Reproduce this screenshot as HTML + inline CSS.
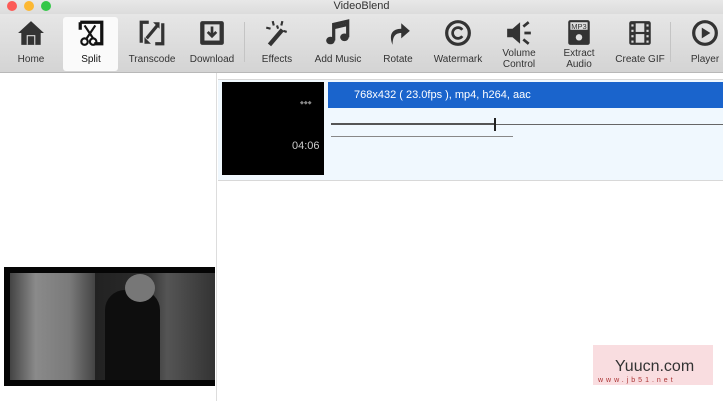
<!DOCTYPE html><html><head><style>
body{margin:0;width:723px;height:401px;overflow:hidden;background:#fff;font-family:"Liberation Sans",sans-serif;position:relative}
.a{position:absolute}
#title{left:0;top:0;width:723px;height:14px;background:linear-gradient(#e8e8e8,#dcdcdc);font-size:11px;text-align:center;line-height:13px;color:#333}
#tb{left:0;top:14px;width:723px;height:58px;background:linear-gradient(#e6e6e6,#d4d4d4);border-bottom:1px solid #b8b8b8}
.dot{width:10px;height:10px;border-radius:50%;top:1px}
.it{position:absolute;top:0;width:60px;height:58px;text-align:center;font-size:10px;color:#333}
.it svg{position:absolute;left:16px;top:5px}
.it span{position:absolute;left:-10px;right:-10px;top:40px;line-height:11px}
.sep{position:absolute;top:8px;width:1px;height:40px;background:#c4c4c4}
</style></head><body>
<div id="title" class="a">VideoBlend</div>
<div class="a dot" style="left:7px;background:#fc5b57"></div>
<div class="a dot" style="left:24px;background:#fcb833"></div>
<div class="a dot" style="left:41px;background:#34c748"></div>
<div id="tb" class="a">
<div class="it" style="left:1px"><svg width="28" height="28" viewBox="0 0 26 26"><path d="M13 2 L1 13 L4 13 L4 24 L22 24 L22 13 L25 13 Z" fill="#333"/><rect x="9" y="15" width="8" height="9" fill="#e0e0e0"/><rect x="10" y="16" width="6" height="8" fill="#333"/></svg><span>Home</span></div>
<div class="a" style="left:63px;top:3px;width:55px;height:54px;background:#fafafa;border-radius:3px"></div>
<div class="it" style="left:61px"><svg width="28" height="28" viewBox="0 0 26 26"><path d="M3 3 H23 V23 H16" stroke="#111" stroke-width="3" fill="none"/><path d="M3 3 V10" stroke="#111" stroke-width="3"/><path d="M7 6 L15 18 M17 6 L9 18" stroke="#111" stroke-width="2"/><circle cx="7" cy="21" r="3" stroke="#111" stroke-width="2" fill="none"/><circle cx="15" cy="21" r="3" stroke="#111" stroke-width="2" fill="none"/></svg><span style="color:#111">Split</span></div>
<div class="it" style="left:122px"><svg width="28" height="28" viewBox="0 0 26 26"><path d="M10 3 H3 V22 M16 23 H23 V4" stroke="#333" stroke-width="3" fill="none"/><path d="M8 18 L18 6" stroke="#333" stroke-width="3"/><path d="M14 3 L20 3 L20 9Z M6 17 L6 23 L12 23Z" fill="#333"/></svg><span>Transcode</span></div>
<div class="it" style="left:182px"><svg width="28" height="28" viewBox="0 0 26 26"><rect x="2" y="2" width="22" height="22" rx="2" fill="#333"/><rect x="6" y="5" width="14" height="15" fill="#e0e0e0"/><path d="M13 7 V15 M9 12 L13 16 L17 12" stroke="#333" stroke-width="2.5" fill="none"/></svg><span>Download</span></div>
<div class="sep" style="left:244px"></div>
<div class="it" style="left:247px"><svg width="28" height="28" viewBox="0 0 26 26"><path d="M6 24 L18 10" stroke="#333" stroke-width="4"/><path d="M9 2 L10 6 M3 8 L7 9 M18 2 L17 6 M22 12 L19 11 M13 6 L14 9" stroke="#333" stroke-width="2"/></svg><span>Effects</span></div>
<div class="it" style="left:308px"><svg width="28" height="28" viewBox="0 0 26 26"><path d="M9 20 V5 L22 2 V17" stroke="#333" stroke-width="3" fill="none"/><ellipse cx="6" cy="20" rx="4" ry="3.5" fill="#333"/><ellipse cx="19" cy="17" rx="4" ry="3.5" fill="#333"/><path d="M9 8 L22 5" stroke="#333" stroke-width="3"/></svg><span>Add Music</span></div>
<div class="it" style="left:368px"><svg width="28" height="28" viewBox="0 0 26 26"><path d="M8 24 C4 14 8 9 16 9 V4 L24 11 L16 18 V13 C10 13 8 17 8 24Z" fill="#333"/></svg><span>Rotate</span></div>
<div class="it" style="left:428px"><svg width="28" height="28" viewBox="0 0 26 26"><circle cx="13" cy="13" r="10.5" stroke="#333" stroke-width="3" fill="none"/><path d="M17 10 A5 5 0 1 0 17 16" stroke="#333" stroke-width="2.5" fill="none"/></svg><span>Watermark</span></div>
<div class="it" style="left:489px"><svg width="28" height="28" viewBox="0 0 26 26"><path d="M2 9 H7 L14 3 V23 L7 17 H2Z" fill="#333"/><path d="M17 7 L22 3 M18 13 H24 M17 19 L22 23" stroke="#333" stroke-width="2.5"/></svg><span style="top:34px">Volume<br>Control</span></div>
<div class="it" style="left:549px"><svg width="28" height="28" viewBox="0 0 26 26"><rect x="3" y="1" width="20" height="23" rx="2" fill="#333"/><rect x="5" y="3" width="16" height="7" fill="#ddd"/><text x="13" y="9.5" font-size="7" text-anchor="middle" fill="#333" font-family="Liberation Sans">MP3</text><circle cx="13" cy="17" r="3" fill="#ddd"/></svg><span style="top:34px">Extract<br>Audio</span></div>
<div class="it" style="left:610px"><svg width="28" height="28" viewBox="0 0 26 26"><rect x="3" y="2" width="20" height="22" rx="2" fill="#333"/><rect x="9" y="4" width="8" height="8" fill="#ddd"/><rect x="9" y="14" width="8" height="8" fill="#ddd"/><rect x="5" y="5" width="2" height="2" fill="#ddd"/><rect x="5" y="10" width="2" height="2" fill="#ddd"/><rect x="5" y="15" width="2" height="2" fill="#ddd"/><rect x="5" y="20" width="2" height="2" fill="#ddd"/><rect x="19" y="5" width="2" height="2" fill="#ddd"/><rect x="19" y="10" width="2" height="2" fill="#ddd"/><rect x="19" y="15" width="2" height="2" fill="#ddd"/><rect x="19" y="20" width="2" height="2" fill="#ddd"/></svg><span>Create GIF</span></div>
<div class="sep" style="left:670px"></div>
<div class="it" style="left:675px"><svg width="28" height="28" viewBox="0 0 26 26"><circle cx="13" cy="13" r="10.5" stroke="#333" stroke-width="3" fill="none"/><path d="M10 8 L18 13 L10 18Z" fill="#333"/></svg><span>Player</span></div>
</div>
<div class="a" style="left:216px;top:73px;width:1px;height:328px;background:#ddd"></div>
<div class="a" style="left:218px;top:79px;width:505px;height:100px;background:#f0f8fe;border-top:1px solid #d8d8d8;border-bottom:1px solid #d8d8d8"></div>
<div class="a" style="left:222px;top:82px;width:102px;height:93px;background:#000"></div>
<div class="a" style="left:300px;top:100px;font-size:5px;color:#888">◆◆◆</div>
<div class="a" style="left:292px;top:140px;font-size:11px;color:#ccc">04:06</div>
<div class="a" style="left:328px;top:82px;width:395px;height:26px;background:#1a64cc;color:#fff;font-size:11px;line-height:26px;text-indent:26px">768x432 ( 23.0fps ), mp4, h264, aac</div>
<div class="a" style="left:331px;top:124px;width:392px;height:1px;background:#666"></div>
<div class="a" style="left:331px;top:123px;width:164px;height:2px;background:#555"></div>
<div class="a" style="left:494px;top:118px;width:2px;height:13px;background:#222"></div>
<div class="a" style="left:331px;top:136px;width:182px;height:1px;background:#888"></div>
<div class="a" style="left:4px;top:267px;width:211px;height:119px;background:#050505"></div>
<div class="a" style="left:10px;top:273px;width:85px;height:107px;background:linear-gradient(90deg,#444,#8a8a8a 30%,#7a7a7a 70%,#444)"></div>
<div class="a" style="left:95px;top:273px;width:120px;height:107px;background:linear-gradient(90deg,#222,#2a2a2a 40%,#555 60%,#333)"></div>
<div class="a" style="left:105px;top:290px;width:55px;height:90px;background:#0e0e0e;border-radius:20px 20px 0 0"></div>
<div class="a" style="left:125px;top:274px;width:30px;height:28px;background:#777;border-radius:50%"></div>
<div class="a" style="left:593px;top:345px;width:120px;height:40px;background:rgba(230,120,130,.25)"></div>
<div class="a" style="left:615px;top:358px;font-size:16px;color:#333">Yuucn.com</div>
<div class="a" style="left:598px;top:377px;font-size:7px;color:#a33;letter-spacing:3px">www.jb51.net</div>
</body></html>
